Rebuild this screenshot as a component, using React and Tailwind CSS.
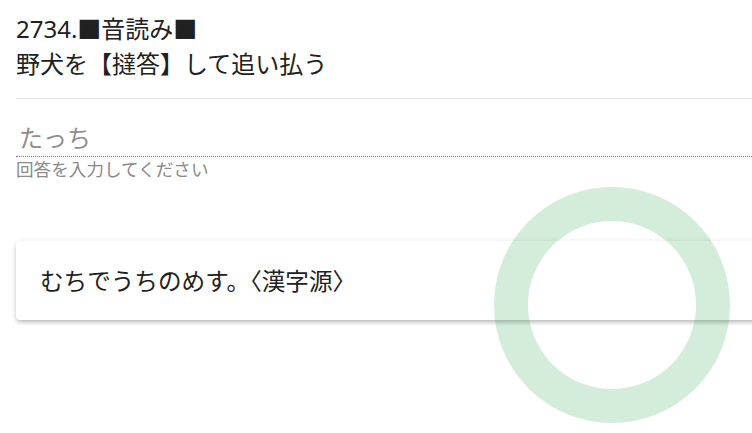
import React from "react";

// Quiz card: reading question, answer field, hint card and a "correct" ring overlay
const FONT = { fontFamily: '"Noto Sans", "Noto Sans CJK JP", sans-serif' };

const App = () => {
  const [answer, setAnswer] = React.useState("");

  return (
    <div className="relative w-[752px] h-[433px] overflow-hidden bg-white text-[#212121]" style={FONT}>
      <div className="w-[780px] pl-4 pt-[11px]">
        <div className="text-[24px] leading-[35px]">
          <div>2734.■音読み■</div>
          <div>野犬を【撻答】して追い払う</div>
        </div>
        <div className="mt-[17px] h-px bg-[#e0e0e0]" />

        {/* Answer input */}
        <div className="mt-[21px]">
          <input
            value={answer}
            onChange={(e) => setAnswer(e.target.value)}
            placeholder="たっち"
            className="w-full h-[37px] pl-[3px] pb-[1px] text-[24px] outline-none bg-transparent border-b border-dotted border-[#777] placeholder:text-[#8e8e8e]"
            style={FONT}
            autoComplete="off"
          />
          <div className="text-[17.6px] leading-[24px] text-[#8a8a8a]">回答を入力してください</div>
        </div>

        {/* Hint card */}
        <div className="mt-[60px] h-[79px] flex items-center pl-6 pt-[3px] rounded-[4px] bg-white shadow-[0_3px_4px_-1px_rgba(0,0,0,0.22),0_1px_6px_0_rgba(0,0,0,0.12)]">
          <span className="text-[23.6px]">むちでうちのめす。〈漢字源〉</span>
        </div>
      </div>

      {/* Correct-answer ring */}
      <svg className="absolute left-[494px] top-[187px] pointer-events-none" width="236" height="236" viewBox="0 0 236 236">
        <circle cx="118" cy="118" r="101" fill="none" stroke="#28a745" strokeOpacity="0.2" strokeWidth="34" />
      </svg>
    </div>
  );
};

export default App;
